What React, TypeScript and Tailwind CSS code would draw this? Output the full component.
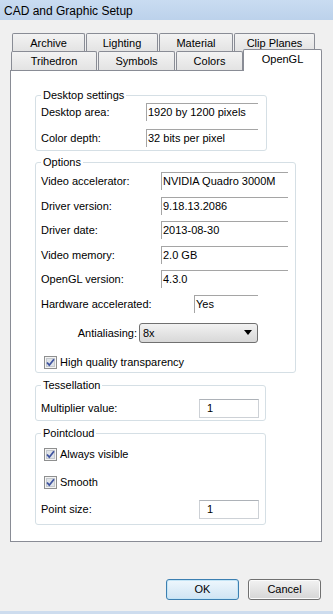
import React from 'react';

// Win7-style "CAD and Graphic Setup" dialog, OpenGL page

const CheckBox: React.FC = () => (
  <svg width="13" height="13" viewBox="0 0 13 13" className="shrink-0">
    <rect x="0.5" y="0.5" width="12" height="12" fill="#f4f4f4" stroke="#8e8f8f" />
    <rect x="2.5" y="2.5" width="8" height="8" fill="#dfe3e8" stroke="#c4c8cd" />
    <path d="M3 6.5 L5.3 9.2 L10 3.2" fill="none" stroke="#3f54a0" strokeWidth="1.8" />
  </svg>
);

const StaticField: React.FC<{ value: string; w: string }> = ({ value, w }) => (
  <div className={`${w} h-[18px] border-t border-l border-[#a5a5a5] pl-[1px] leading-[17px] whitespace-nowrap`}>{value}</div>
);

const EditField: React.FC<{ value: string }> = ({ value }) => (
  <div className="w-[60px] h-[19px] border border-[#cdd1d6] border-t-[#adb2b8] pl-[7px] leading-[17px]">{value}</div>
);

const Group: React.FC<{ title: string; w: string; className?: string; children: React.ReactNode }> = ({
  title,
  w,
  className = '',
  children,
}) => (
  <fieldset className={`${w} ${className} rounded-[3px] border border-[#d5dfe5] px-[5px]`}>
    <legend className="px-[2px] h-[15px] leading-[15px]">{title}</legend>
    {children}
  </fieldset>
);

const backTabs = [
  { label: 'Archive', w: 'w-[73px]' },
  { label: 'Lighting', w: 'w-[72px]' },
  { label: 'Material', w: 'w-[74px]' },
  { label: 'Clip Planes', w: 'w-[81px]' },
];

const frontTabs = [
  { label: 'Trihedron', w: 'w-[86px]' },
  { label: 'Symbols', w: 'w-[77px]' },
  { label: 'Colors', w: 'w-[67px]' },
];

const options = [
  { label: 'Video accelerator:', value: 'NVIDIA Quadro 3000M' },
  { label: 'Driver version:', value: '9.18.13.2086' },
  { label: 'Driver date:', value: '2013-08-30' },
  { label: 'Video memory:', value: '2.0 GB' },
  { label: 'OpenGL version:', value: '4.3.0' },
];

const App: React.FC = () => {
  return (
    <div className="w-[333px] h-[614px] bg-[#f0f0f0] flex flex-col text-[11px] text-black font-['Liberation_Sans',Arial,sans-serif] overflow-hidden">
      {/* title bar */}
      <div className="h-[20px] shrink-0 bg-gradient-to-b from-[#c9dcf1] to-[#bcd2eb] pl-[4px] leading-[22px] text-[12px]">
        CAD and Graphic Setup
      </div>

      {/* tabs */}
      <div className="mt-[13px] pl-[12px] flex gap-px">
        {backTabs.map((t) => (
          <div
            key={t.label}
            className={`${t.w} h-[18px] border border-b-0 border-[#898c95] rounded-t-[2px] bg-gradient-to-b from-[#f3f3f3] to-[#e3e3e3] text-center leading-[18px]`}
          >
            {t.label}
          </div>
        ))}
      </div>
      <div className="pl-[11px] flex items-end gap-px h-[19px]">
        {frontTabs.map((t) => (
          <div
            key={t.label}
            className={`${t.w} h-[19px] border border-b-0 border-[#898c95] rounded-t-[2px] bg-gradient-to-b from-[#f3f3f3] to-[#e3e3e3] text-center leading-[18px]`}
          >
            {t.label}
          </div>
        ))}
        <div className="relative z-10 -ml-px -mb-px w-[79px] h-[22px] border border-b-0 border-[#898c95] rounded-t-[2px] bg-white text-center leading-[18px]">
          OpenGL
        </div>
      </div>

      {/* page */}
      <div className="ml-[10px] w-[312px] h-[472px] border border-[#898c95] bg-white pt-[17px] pl-[24px]">
        <Group title="Desktop settings" w="w-[232px]">
          <div className="flex flex-col gap-[8px] pb-[3px]">
            <div className="flex h-[18px]">
              <span className="w-[105px] leading-[17px] pt-px">Desktop area:</span>
              <StaticField value="1920 by 1200 pixels" w="w-[112px]" />
            </div>
            <div className="flex h-[18px]">
              <span className="w-[105px] leading-[17px] pt-px">Color depth:</span>
              <StaticField value="32 bits per pixel" w="w-[112px]" />
            </div>
          </div>
        </Group>

        <Group title="Options" w="w-[261px]" className="mt-[4px]">
          <div className="pt-[2px] flex flex-col gap-[6.6px]">
            {options.map((o) => (
              <div key={o.label} className="flex h-[18px]">
                <span className="w-[120px] leading-[17px] pt-px">{o.label}</span>
                <StaticField value={o.value} w="w-[127px]" />
              </div>
            ))}
            <div className="flex h-[18px]">
              <span className="w-[153px] leading-[17px] pt-px">Hardware accelerated:</span>
              <StaticField value="Yes" w="w-[64px]" />
            </div>
          </div>
          <div className="mt-[10px] flex items-center h-[20px]">
            <span className="w-[96px] text-right mr-[2px]">Antialiasing:</span>
            <div className="w-[119px] h-[20px] rounded-[3px] border border-[#707070] bg-gradient-to-b from-[#f2f2f2] to-[#d8d8d8] flex items-center justify-between pl-[3px] pr-[5px]">
              <span>8x</span>
              <svg width="8" height="5" viewBox="0 0 8 5">
                <path d="M0 0 H8 L4 5 Z" fill="#000" />
              </svg>
            </div>
          </div>
          <div className="mt-[12px] mb-[2px] h-[15px] flex items-center pl-[3px] gap-[3px]">
            <CheckBox />
            <span>High quality transparency</span>
          </div>
        </Group>

        <Group title="Tessellation" w="w-[231px]" className="mt-[5px]">
          <div className="pt-[6px] pb-[2px] flex h-[27px]">
            <span className="w-[158px] leading-[17px] pt-px">Multiplier value:</span>
            <EditField value="1" />
          </div>
        </Group>

        <Group title="Pointcloud" w="w-[231px]" className="mt-[5px]">
          <div className="pt-[6px] h-[15px] box-content flex items-center pl-[3px] gap-[3px]">
            <CheckBox />
            <span>Always visible</span>
          </div>
          <div className="mt-[13px] h-[15px] flex items-center pl-[3px] gap-[3px]">
            <CheckBox />
            <span>Smooth</span>
          </div>
          <div className="mt-[10px] pb-[5px] flex">
            <span className="w-[158px] leading-[17px] pt-px">Point size:</span>
            <EditField value="1" />
          </div>
        </Group>
      </div>

      {/* buttons */}
      <div className="mt-[37px] flex justify-end gap-[9px] pr-[12px]">
        <button className="w-[73px] h-[21px] rounded-[3px] border border-[#3c7fb1] bg-gradient-to-b from-[#eef7fd] to-[#cfe4f3] shadow-[inset_0_0_0_1px_#c4e5f6]">
          OK
        </button>
        <button className="w-[73px] h-[21px] rounded-[3px] border border-[#707070] bg-gradient-to-b from-[#f2f2f2] to-[#d6d6d6] shadow-[inset_0_0_0_1px_#fbfbfb]">
          Cancel
        </button>
      </div>

      <div className="mt-auto h-[3px] bg-[#cddcee]" />
    </div>
  );
};

export default App;
